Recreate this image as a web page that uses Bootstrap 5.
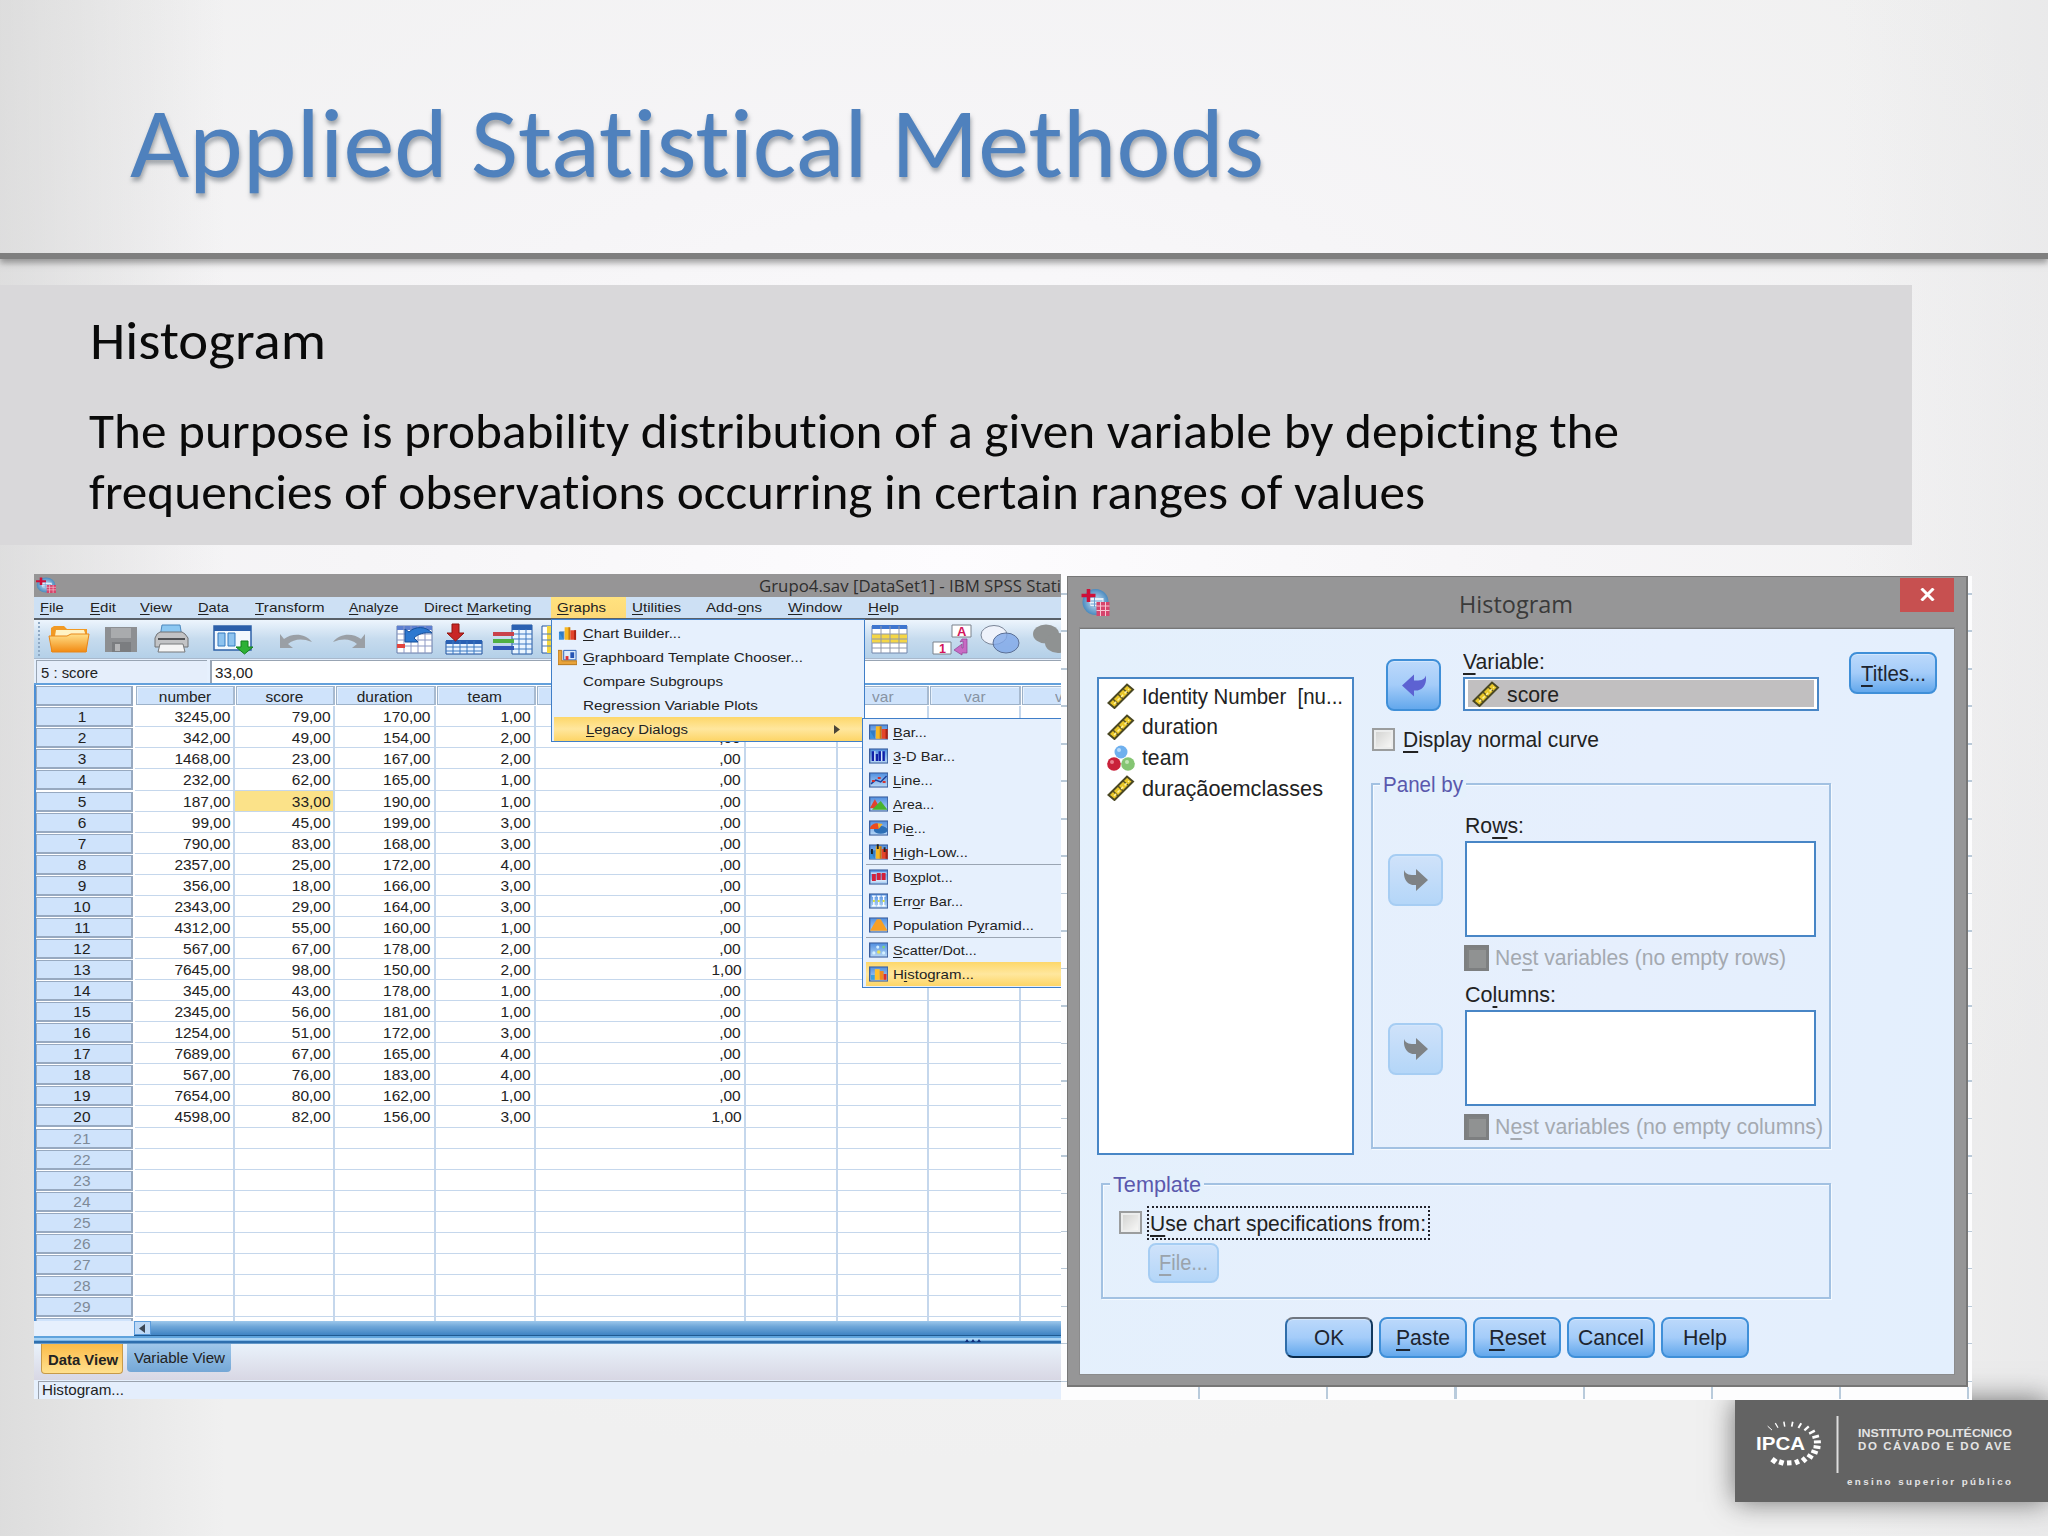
<!DOCTYPE html>
<html lang="en">
<head>
<meta charset="utf-8">
<title>Applied Statistical Methods</title>
<link href="https://cdn.jsdelivr.net/npm/bootstrap@5.3.0/dist/css/bootstrap.min.css" rel="stylesheet">
<style>
body{width:2048px;height:1536px;overflow:hidden;position:relative;font-family:"Liberation Sans",Arial,sans-serif;color:#222;
background:linear-gradient(90deg,rgba(205,205,205,.55),rgba(230,230,230,0) 11%),linear-gradient(270deg,rgba(222,222,224,.35),rgba(240,240,240,0) 10%),radial-gradient(ellipse 1300px 900px at 950px 560px,#fdfcfe 0,#f6f5f7 45%,#f0f0f0 100%)}
[data-w]{display:inline-block;white-space:nowrap;transform-origin:0 50%;flex:none}
u{text-decoration-thickness:1px;text-underline-offset:2px}
.slide-head{height:259px;padding:94px 0 0 130px;border-bottom:6px solid #7f7f7f;box-shadow:0 4px 6px rgba(90,90,90,.55)}
.slide-head h1{font:400 99px/100px Carlito,Lato,sans-serif;font-variant-ligatures:none;color:#4f81bd;margin:0;text-shadow:1px 4px 4px rgba(80,90,100,.5)}
.band{width:1912px;height:260px;margin-top:26px;padding:26px 0 0 89px;background:#d9d8da;font-family:Carlito,Lato,sans-serif;font-variant-ligatures:none;color:#0a0a0a}
.band h2{font-size:54px;line-height:60px;margin:0 0 29.5px 1px}
.band p{font-size:49.5px;line-height:61px;margin:0}
/* data editor window */
.editor{left:34px;top:574px;width:1027px;height:825px;overflow:hidden;background:#e6f0fd}
.e-title{height:23px;background:#969596;padding-left:724.7px;font:15.5px/24px "Open Sans",sans-serif;color:#2e2e2e}
.e-menu{height:21px;background:#cde0f4;font-size:13.5px;line-height:21px}
.e-menu>span{position:relative;z-index:1}
.e-menu .hot::before{content:"";position:absolute;z-index:-1;inset:0 -20px 0 -6px;background:linear-gradient(#ffe27f,#fdd977)}
.e-tools{height:41px;border-top:2px solid #596068;border-bottom:1px solid #a9b9cc;background:linear-gradient(#edf5fd,#c6dbee 50%,#b4d0e8)}
.e-edit{height:26px;font-size:14.5px;line-height:24px;border-bottom:2px solid #63a0db;padding-top:1px}
.e-edit .w1{width:171px;margin-left:2px;padding-left:4px;border:solid #98a4b3;border-width:1px 0 0 1px;background:#e5eefb}
.e-edit .w2{margin-left:3px;padding-left:3px;border:solid #98a4b3;border-width:1px 0 0 2px;background:#fff}
.grid-area{height:635.5px;overflow:hidden;border-left:2px solid #4c8fd6;background:#fff;font-size:14.2px}
.g-row{height:21.07px;line-height:22px}
.g-row>div{flex:none;border:solid #c5d7ec;border-width:0 2px 1px 0;text-align:right;padding-right:3px}
.g-row>div>span{display:inline-block;transform:scaleX(1.09);transform-origin:100% 50%}
.g-row>.rh{width:97px;background:#cfe3fb;border:1px solid #97a9c0;border-right-width:2px;border-bottom-width:2px;height:20px;margin:1px 2px 0 0;line-height:18px;text-align:center;padding:0 4px 0 0}
.g-row>.rh>span,.g-head>div>span{transform-origin:50% 50%}
.g-row>.blank-rh{color:#7e8a98}
.g-head{height:21.3px}
.g-head>div{text-align:center;background:#cfe3fb;border:1px solid #9db2c9;border-right:2px solid #a7bad0;padding:0;margin:1px 0 1px 1px;line-height:20px}
.g-head>.c{box-shadow:inset 1px 1px #e6f1fd;padding:0 1px 0 0}
.c-a{width:100.2px}.c-b{width:210.4px}.c-c{width:91.6px}
.g-head>.c-a{width:99.2px}.g-head>.c-b{width:209.4px}.g-head>.c-c{width:90.6px}
.pale{color:#8793a3}
.picked{background:#fbe289}
.h-scroll{height:15px;margin-left:100px;background:linear-gradient(#9dc8ec,#6ea6d8 40%,#3f83c3);border-bottom:1px solid #1f5a92}
.h-scroll i{display:block;width:17px;height:14px;background:#bcd8f6;border:1px solid #5c9cdb;padding:2px 0 0 4px;line-height:0}
.splitter{height:8px;background:linear-gradient(#5fa3dc 0 2px,#a9d3f4 2px 4px,#7db5e5 4px 5px,#2e6fae 5px 7px,#9cc3e6)}
.tabs{height:36px;background:linear-gradient(#e9f2fb,#d8d7e4);font-size:14px;padding-left:7px}
.tab-a{width:82px;height:30px;line-height:32px;background:linear-gradient(#fbbb48,#ffe08e);border:1px solid #c79a49;border-top:0;border-radius:0 0 4px 4px;font-weight:700;padding-left:6px}
.tab-b{width:104px;height:28px;line-height:28px;margin-left:4px;background:linear-gradient(#9fc7ea,#74a7d6);border-radius:0 0 4px 4px;padding-left:7px}
.status{height:20px;margin:1px 0 0 4px;border:solid #9aa2ad;border-width:1px 0 2px 1px;background:#e4eefc;font-size:14.5px;line-height:17px;padding-left:3px}
.drop{border:1.5px solid #3f7ec8;background:#e6f0fd;font-size:13.5px}
.drop>div{height:24px;line-height:24px;display:flex;align-items:center}
.drop svg{flex:none}
.menu1{left:517px;top:45px;width:314px;height:123px;padding:1px 2px}
.menu2{left:828px;top:144px;width:240px;height:270px;padding:1px 3px}
.menu1 [data-w],.menu2 [data-w]{padding-top:1px}
.menu1>div>svg,.menu1>div>b{width:19px;margin:0 6px 0 4px}
.menu2>div>svg{width:19.5px;margin:0 4.5px 0 2.5px}
.menu2>hr{margin:0;border-top:1px solid #8792a0;opacity:.8}
.glow{background:linear-gradient(#fdd76a,#ffe79e 50%,#fdd566)}
/* sheet behind the dialog */
.sheet{left:1061px;top:576px;width:911px;height:823.5px;background:repeating-linear-gradient(#fff0 0 17px,#b9c9d8 17px 18.5px,#fff0 18.5px 37.5px),#fdfdfe}
.sheet .foot{height:12px;margin-top:811px;background:repeating-linear-gradient(90deg,#fdfdfe 0 126px,#b9cbdc 126px 128.2px) 11px 0 no-repeat,#fdfdfe}
.dlg{left:1067px;top:575.5px;width:901px;height:811.5px;background:#969697;border:solid #777;border-width:1px 2px 2px 1px;padding:0 12px}
.d-title{height:52.5px;font:24.5px/30px "Open Sans",sans-serif;color:#3a3a3a}
.d-title>svg{margin:11px 0 0 1px}
.d-title>span{margin:12px 0 0 349px}
.d-title>b{margin:1px 0 0 auto;width:54px;height:34px;background:#c75050;display:flex;align-items:center;justify-content:center}
.d-body{width:874px;height:746px;background:linear-gradient(100deg,#e4f0fc,#e6effd 60%,#e3effd);font-size:22.3px;border-top:1px solid #777;margin-top:-1px;box-shadow:0 0 0 1px #8b8b8c}
.d-body u{text-underline-offset:4px;text-decoration-thickness:2px}
.box{background:#fff;border:2px solid #4886c6;flex:none}
.vars{width:256.5px;height:478px;margin:48px 0 0 17px;padding:2px 0 0 8px}
.vars>div{height:30.7px;display:flex;align-items:center}
.vars svg,.field svg{width:28px;height:26px;margin-right:7px;flex:none}
.mid{width:460px;margin-left:17.5px}
.pbtn{flex:none;border:2px solid #3f8fd8;border-radius:8px;background:linear-gradient(#bcd9fb,#a4ccf9 50%,#63a8ec);display:flex;align-items:center;justify-content:center;box-shadow:inset 0 1px #d3e6fc;color:#1d2530}
.pbtn>[data-w]{padding-top:1px}
.off{border-color:#a6cdf3;background:linear-gradient(#cfe2fa,#b4d6f8);color:#9aa3ac}
.mv{width:55px;height:52px}
.lab{height:28px;line-height:25px}
.field{width:356px;height:34px;padding:1px 3px}
.field>div{height:27px;background:#c1bfc0;padding-left:4px}
.field [data-w]{padding-top:3px}
.cb{width:23px;height:23px;border:2px solid #9b9d9e;background:linear-gradient(135deg,#d0d0ce,#fbfbfa);box-shadow:inset 0 0 0 2px #eceded;flex:none}
.cb.dis{width:25.5px;height:26px;border:3px solid #7d7f80;background:#909292;box-shadow:inset 2px 2px #808282}
.fs{border:2px solid #a2c1e2;box-shadow:inset 1px 1px #f5faff,1px 1px #f5faff}
.leg{line-height:24px;height:24px;margin:-11.6px 0 0 7px;padding:0 3px;color:#5a58ad;background:#e4f0fc;display:table}
.grp{height:168.7px}
.nest{height:26px;gap:6px;margin:8px 0 0 -1.5px;color:#a4a9b0}
.ants{width:283px;height:34px;border:2px dotted #23232b;line-height:31px;padding-left:1px}
.ok{border-color:#6f7680 #12395e #0a2b4b #2f6da9}
/* school plate */
.plate{left:1735px;top:1400px;width:313px;height:102px;background:#636363;box-shadow:0 0 26px rgba(70,70,70,.75)}
</style>
</head>
<body>
<footer class="plate position-absolute"><svg width="313" height="102" fill="#fff">
<g id="rays"></g>
<text x="21" y="50" font-size="18.500" font-weight="700" textLength="49" lengthAdjust="spacingAndGlyphs">IPCA</text>
<path d="M101.500 16h2v57h-2z" fill="#ddd"/>
<g font-weight="700" fill="#e4e4e4"><text x="123" y="37" font-size="11.500" textLength="154" lengthAdjust="spacingAndGlyphs">INSTITUTO POLITÉCNICO</text>
<text x="123" y="50" font-size="11.500" textLength="153">DO CÁVADO E DO AVE</text>
<text x="112" y="85" font-size="9.800" textLength="164">ensino superior público</text></g>
</svg></footer>
<header class="slide-head"><h1><span data-w="1134">Applied Statistical Methods</span></h1></header>
<section class="band">
<h2><span data-w="236">Histogram</span></h2>
<p><span data-w="1530">The purpose is probability distribution of a given variable by depicting the</span><br><span data-w="1336">frequencies of observations occurring in certain ranges of values</span></p>
</section>

<svg width="0" height="0" class="position-absolute">
<defs>
<linearGradient id="fo" x2="0" y2="1"><stop stop-color="#ffe08a"/><stop offset="1" stop-color="#f28a12"/></linearGradient>
<linearGradient id="sk" x2="0" y2="1"><stop stop-color="#4f8ee0"/><stop offset="1" stop-color="#b9d8f6"/></linearGradient>
<radialGradient id="gl"><stop stop-color="#cfe6f7"/><stop offset="1" stop-color="#4a8abf"/></radialGradient>
<symbol id="ruler" viewBox="0 0 28 26"><path d="M1.500 20 20 1.500l6 5L7.500 25z" fill="#e9c727" stroke="#4a4823" stroke-width="2"/><path d="m6 16 5 5m0-10 5 5m0-10 5 4" stroke="#5a5222" stroke-width="1.500"/><path d="m7 21 15-15" stroke="#fff2a0" stroke-width="1.500" stroke-dasharray="3 2"/></symbol>
<symbol id="spss" viewBox="0 0 28 28"><circle cx="14" cy="14" r="13" fill="url(#gl)"/><path d="M7 10h15v8H9z" fill="#e9f3fb"/><path d="M9 13h12M9 16h10M13 9v10" stroke="#6aa0d0"/><path d="M7 1v13M0 7.500h14" stroke="#cf1038" stroke-width="3.600"/><path d="M15 14h13v14H15z" fill="#d6456c"/><path d="M15 18h13M15 22.500h13M19 14v14M24 14v14" stroke="#f7c6d2"/></symbol>
<symbol id="arr" viewBox="0 0 24 22"><path d="M0 1c2 5 6 5 12 5V0l12 11-12 11v-6C4 17-1 11 0 1z"/></symbol>
<symbol id="bars" viewBox="0 0 20 16"><path d="M1 7h5v8H1z" fill="#3a90dd"/><path d="m1 7 1-1h5v8l-1 1z" fill="#2468b0" fill-opacity=".5"/><path d="M7 2h5v13H7z" fill="#f7b823"/><path d="M11 2h2v13h-2z" fill="#c87b10"/><path d="M13 5h6v10h-6z" fill="#e4442a"/><path d="M17 5h2v10h-2z" fill="#a82315"/></symbol>
<symbol id="frm" viewBox="0 0 20 16"><path d="M.7.700h18.600v14.600H.7z" fill="url(#sk)" stroke="#3b5f9e" stroke-width="1.400"/></symbol>
</defs></svg>

<main class="editor position-absolute">
<div class="e-title d-flex position-relative"><svg class="position-absolute" style="left:2px;top:3px" width="20" height="16" viewBox="0 0 28 28" preserveAspectRatio="none"><use href="#spss" width="28" height="28"/></svg><span data-w="302">Grupo4.sav [DataSet1] - IBM SPSS Stati</span></div>
<nav class="e-menu d-flex" id="menubar"></nav>
<div class="e-tools"><svg class="d-block" width="1027" height="38" viewBox="34 620 1027 38" fill="none">
<path d="M39 622v35" stroke="#8fa9c4" stroke-width="2" stroke-dasharray="2 2"/>
<path d="M51 652V628l3-2h10l3 3h20v23z" fill="#f19a24"/><path d="M56 630h28l2 6H55z" fill="#fff3c4"/><path d="M49 636h18l4-2h18l-3 18H52z" fill="url(#fo)" stroke="#e8871a"/>
<path d="M105 627h32v25h-32z" fill="#8d8f92"/><path d="M111 628h20v10h-20z" fill="#a9abad"/><path d="M112 642h19v10h-19z" fill="#7b7d80"/><path d="M115 644h5v7h-5z" fill="#b5b6b8"/>
<path d="M162 625h18l2 12h-22z" fill="#8cc8f2" stroke="#4c88bd"/><path d="M157 634l3-2h22l3 2 3 4v9h-33v-9z" fill="#c2c3c5" stroke="#707275"/><path d="M158 639h27" stroke="#515356" stroke-width="2"/><path d="M160 644h23l2 8h-27z" fill="#f4f4f4" stroke="#77797b"/>
<path d="M214 626h37v24h-37z" fill="#f3f8fd" stroke="#2f62a8" stroke-width="1.500"/><path d="M214 626h37v5h-37z" fill="#2b5faa"/><path d="M218 633h7v13h-7zM228 633h7v13h-7z" fill="#8ec3ef" stroke="#347ac0"/><path d="M241 641h7v6h5l-8.500 7-8.500-7h5z" fill="#2eb135" stroke="#13801d"/>
<path d="M280 634v14h13l-5-4c6-5 14-6 24-2-7-9-20-9-28-3z" fill="#9a9fa5"/><path d="M365 634v14h-13l5-4c-6-5-14-6-24-2 7-9 20-9 28-3z" fill="#9a9fa5"/>
<path d="M397 626h35v27h-35z" fill="#fff" stroke="#667aa8"/><path d="M397 626h35v4h-35z" fill="#5d7fd0"/><path d="M397 634h35M397 640h35M397 646h35M404 626v27M411 626v27M418 626v27M425 626v27" stroke="#8b98c4"/><path d="M397 644h8v4h-8z" fill="#e2453f"/><path d="M405 629v13h13l-4-4c4-4 10-6 18-5-6-7-17-7-23-1z" fill="#2d78d0" stroke="#164f9a"/>
<path d="M446 641h36v13h-36z" fill="#e7f3ff" stroke="#1d4f9b"/><path d="M446 640h36v4h-36z" fill="#2860b3"/><path d="M446 647h36M446 651h36M453 641v13M460 641v13M467 641v13M474 641v13" stroke="#3b78c2"/><path d="M452 624h7v9h5l-8.500 8-8.500-8h5z" fill="#c92625" stroke="#90140f"/>
<path d="M512 625h20v29h-20z" fill="#eaf5ff" stroke="#24579f"/><path d="M512 625h20v5h-20z" fill="#2c62b2"/><path d="M512 634h20M512 639h20M512 644h20M512 649h20M519 629v25M526 629v25" stroke="#3d79c3"/><path d="M493 634h21" stroke="#c9414a" stroke-width="4"/><path d="M493 641h21" stroke="#4fb044" stroke-width="4"/><path d="M493 648h21" stroke="#3157b8" stroke-width="4"/>
<path d="M542 626h14v27h-14z" fill="#fff" stroke="#24579f"/><path d="M547 626h4v27h-4z" fill="#f2d540"/><path d="M542 634h12M542 640h12M542 646h12" stroke="#4d78b5"/>
<path d="M872 626h35v27h-35z" fill="#fff" stroke="#7186ac"/><path d="M872 625h35v4h-35z" fill="#3e76cf"/><path d="M872 634h35v9h-35z" fill="#f5d646"/><path d="M872 634h35M872 639h35M872 643h35M872 648h35M881 626v27M890 626v27M899 626v27" stroke="#9098aa"/>
<path d="M952 625h19v12h-19zM933 642h18v12h-18z" fill="#fff" stroke="#7b828c"/><path d="M962 639h5v14h-5v2l-8-5 8-6v4h1v-7l-3 1z" fill="#c76bc4" stroke="#8e4090" stroke-width=".7"/>
<text x="957" y="635.500" font-size="13" font-weight="700" fill="#d3155b">A</text><text x="939" y="652.500" font-size="12.500" font-weight="700" fill="#d3155b">1</text>
<ellipse cx="994" cy="635" rx="13" ry="9.500" fill="#eef2fb" stroke="#7b8597"/><ellipse cx="1006" cy="643" rx="13" ry="10" fill="#7fa8e8" fill-opacity=".8" stroke="#5b7096"/>
<ellipse cx="1046" cy="634" rx="13" ry="9.500" fill="#8f9292"/><ellipse cx="1058" cy="643" rx="13" ry="10" fill="#8f9292"/>
</svg></div>
<div class="e-edit d-flex"><div class="w1"><span data-w="57">5 : score</span></div><div class="w2 flex-grow-1"><span data-w="38">33,00</span></div></div>
<div class="grid-area" id="cells"></div>
<div class="h-scroll"><i><svg width="7" height="9"><path d="M6 0v9L0 4.500z" fill="#3b4654"/></svg></i></div>
<div class="splitter position-relative"><svg class="position-absolute" style="left:931px;top:2px" width="18" height="5"><path d="M0 4l2-3 2 3zM6 4l2-3 2 3zM12 4l2-3 2 3z" fill="#0e2d7a"/></svg></div>
<div class="tabs d-flex"><div class="tab-a"><span data-w="70">Data View</span></div><div class="tab-b"><span data-w="91">Variable View</span></div></div>
<div class="status"><span data-w="82">Histogram...</span></div>

<div class="drop menu1 position-absolute">
<div><svg height="16" viewBox="0 0 20 16"><use href="#bars"/></svg><span data-w="98"><u>C</u>hart Builder...</span></div>
<div><svg height="17" viewBox="0 0 20 17"><path d="M6 1h13v10H6z" fill="#dcecfc" stroke="#2a62b8"/><path d="M8 7h3v4H8z" fill="#d33"/><path d="M13 3h4v6h-4z" fill="#2554b5"/><path d="M0 1h4v11h16v4H0z" fill="#e8a33a" stroke="#b4751b"/></svg><span data-w="220"><u>G</u>raphboard Template Chooser...</span></div>
<div><b></b><span data-w="140">Compare Subgroups</span></div>
<div><b></b><span data-w="175">Regression Variable Plots</span></div>
<div class="glow"><b></b><span style="margin-left:2.500px" data-w="102"><u>L</u>egacy Dialogs</span><svg class="ms-auto" style="width:6px;margin-right:22px" height="9"><path d="M0 0v9l6-4.500z" fill="#4b4538"/></svg></div>
</div>
<div class="drop menu2 position-absolute" id="legacy"></div>
</main>

<div class="sheet position-absolute"><div class="foot"></div></div>
<section class="dlg position-absolute">
<div class="d-title d-flex"><svg width="29" height="28"><use href="#spss"/></svg><span data-w="114">Histogram</span><b><svg width="15" height="13"><path d="m1.500.500 12 12m0-12-12 12" stroke="#fff" stroke-width="3"/></svg></b></div>
<div class="d-body">
 <div class="d-flex">
  <div class="box vars">
   <div><svg><use href="#ruler"/></svg><span data-w="201">Identity Number&nbsp; [nu...</span></div>
   <div><svg><use href="#ruler"/></svg><span data-w="76">duration</span></div>
   <div><svg viewBox="0 0 28 26"><circle cx="14" cy="7" r="6.500" fill="#6fb0ee"/><circle cx="7" cy="19" r="6.800" fill="#c9213a"/><circle cx="21" cy="19" r="6.800" fill="#85c573"/><circle cx="12" cy="5" r="2" fill="#b9dcfb"/><circle cx="5" cy="17" r="2" fill="#ea7f8d"/><circle cx="20" cy="17" r="2" fill="#c3e6b6"/></svg><span data-w="47">team</span></div>
   <div><svg><use href="#ruler"/></svg><span data-w="181">duraçãoemclasses</span></div>
  </div>
  <div class="mid">
   <div class="d-flex">
    <div class="pbtn mv" style="margin:30px 0 0 15px"><svg width="24" height="23" style="transform:scaleX(-1)" fill="#5d62d2"><use href="#arr"/></svg></div>
    <div style="margin:20px 0 0 22px"><div class="lab"><span data-w="82"><u>V</u>ariable:</span></div>
     <div class="box field"><div class="d-flex align-items-center"><svg><use href="#ruler"/></svg><span data-w="52">score</span></div></div></div>
   </div>
   <div class="d-flex align-items-center gap-2" style="height:23px;margin:17px 0 32px 1px"><div class="cb"></div><span data-w="196"><u>D</u>isplay normal curve</span></div>
   <div class="fs" style="height:366px">
    <div class="leg" style="margin-bottom:15.600px"><span data-w="80">Panel by</span></div>
    <div class="d-flex grp"><div class="pbtn off mv" style="margin:41px 22px 0 15px"><svg width="24" height="22" fill="#7e8285"><use href="#arr"/></svg></div>
     <div><div class="lab"><span data-w="59">Ro<u>w</u>s:</span></div><div class="box" style="width:351px;height:96px"></div>
     <div class="d-flex align-items-center nest"><div class="cb dis"></div><span data-w="291">Ne<u>s</u>t variables (no empty rows)</span></div></div></div>
    <div class="d-flex grp"><div class="pbtn off mv" style="margin:41px 22px 0 15px"><svg width="24" height="22" fill="#7e8285"><use href="#arr"/></svg></div>
     <div><div class="lab"><span data-w="91">Co<u>l</u>umns:</span></div><div class="box" style="width:351px;height:96px"></div>
     <div class="d-flex align-items-center nest"><div class="cb dis"></div><span data-w="328">N<u>e</u>st variables (no empty columns)</span></div></div></div>
   </div>
  </div>
  <div class="pbtn" style="width:88px;height:42px;margin:23px 0 0 18px"><span data-w="65"><u>T</u>itles...</span></div>
 </div>
 <div class="fs" style="width:730px;height:116px;margin:27.500px 0 18.500px 21px">
  <div class="leg"><span data-w="88">Template</span></div>
  <div class="d-flex align-items-center" style="margin:8.600px 0 3px 16px;gap:4.500px"><div class="cb"></div><div class="ants"><span data-w="276"><u>U</u>se chart specifications from:</span></div></div>
  <div class="pbtn off" style="width:71px;height:40px;margin-left:45px"><span data-w="49"><u>F</u>ile...</span></div>
 </div>
 <div class="d-flex" style="margin-left:205px;gap:6px" id="dlgBtns">
  <div class="pbtn ok"><span data-w="30">OK</span></div><div class="pbtn"><span data-w="54"><u>P</u>aste</span></div><div class="pbtn"><span data-w="57"><u>R</u>eset</span></div><div class="pbtn"><span data-w="66">Cancel</span></div><div class="pbtn"><span data-w="44">Help</span></div>
 </div>
</div>
</section>

<script src="https://cdn.jsdelivr.net/npm/bootstrap@5.3.0/dist/js/bootstrap.bundle.min.js"></script>
<script>
// menu bar: left edge, width, label
const bar=[[40,23.5,'<u>F</u>ile'],[90,26,'<u>E</u>dit'],[140,32,'<u>V</u>iew'],[198,31,'<u>D</u>ata'],[255,69.5,'<u>T</u>ransform'],[349,49.5,'<u>A</u>nalyze'],[424,107.5,'Direct <u>M</u>arketing'],[557,49,'<u>G</u>raphs'],[632,49,'<u>U</u>tilities'],[706,56,'Add-<u>o</u>ns'],[788,54,'<u>W</u>indow'],[868,31,'<u>H</u>elp']];
let at=34;
document.getElementById('menubar').innerHTML=bar.map(([x,w,t],i)=>{const g=x-at;at=x+w;return `<span class="${i==7?'hot':''}" style="margin-left:${g}px"><span data-w="${w}">${t}</span></span>`}).join('');
// case data
const data=`3245 79 170 1 |342 49 154 2 0|1468 23 167 2 0|232 62 165 1 0|187 33 190 1 0|99 45 199 3 0|790 83 168 3 0|2357 25 172 4 0|356 18 166 3 0|2343 29 164 3 0|4312 55 160 1 0|567 67 178 2 0|7645 98 150 2 1|345 43 178 1 0|2345 56 181 1 0|1254 51 172 3 0|7689 67 165 4 0|567 76 183 4 0|7654 80 162 1 0|4598 82 156 3 1`.split('|').map(r=>r.split(' '));
const cls=['c-a','c-a','c-a','c-a','c-b','c-c','c-c','c-c','c-c'];
let h='<div class="g-row g-head d-flex"><div class="rh"></div>'+['number','score','duration','team','','var','var','var','var'].map((t,i)=>`<div class="c ${cls[i]} ${i>4?'pale':''}"><span>${t}</span></div>`).join('')+'</div>';
for(let r=0;r<30;r++){
 h+=`<div class="g-row d-flex"><div class="rh ${r>19?'blank-rh':''}"><span>${r<29?r+1:''}</span></div>`+cls.map((c,i)=>{const v=data[r]&&data[r][i];const t=!v?'':(v==='0'?'':v)+',00';return `<div class="${c}${r==4&&i==1?' picked':''}"><span>${t}</span></div>`}).join('')+'</div>';
}
document.getElementById('cells').innerHTML=h;
// Legacy Dialogs submenu
const B='<use href="#bars"/>';
const sub=[['<u>B</u>ar...',33.7,B],['<u>3</u>-D Bar...',62,'<path d="M4 3v10M8 6v7M11 3v10M15 3v10" stroke="#1020a8" stroke-width="2.500"/><path d="M6 3v10M13 3v10" stroke="#e8f2ff"/>'],['<u>L</u>ine...',39.7,'<path d="m2 12 5-4 5 2 6-6" stroke="#1c3f9a" fill="none" stroke-width="1.500"/><path d="M3 8h3v2H3zM9 5h3v2H9zM14 9h3v2h-3z" fill="#d5342d"/>'],['<u>A</u>rea...',41,'<path d="m1 12 5-9 6 10z" fill="#e3402f"/><path d="m3 14 9-9 7 9z" fill="#48b32e"/>'],['Pi<u>e</u>...',32.7,'<ellipse cx="12" cy="10" rx="7" ry="4" fill="#2d6fb5"/><path d="M10 9 1 9c0-4 4-6 8-6z" fill="#ec4b1e"/><path d="m10 9-1-6 5 1z" fill="#f6b42a"/>'],['<u>H</u>igh-Low...',75,B+'<path d="M3 5v5M9 0v5M16 3v5" stroke="#222" stroke-width="2"/>'],0,['Bo<u>x</u>plot...',59.7,'<path d="M2 4h16M2 12h16" stroke="#fff"/><path d="M3 5h4v7H3zM8 4h4v7H8zM13 4h4v7h-4z" fill="#d3203a"/>'],['Err<u>o</u>r Bar...',70,'<path d="M5 3v10M10 3v10M15 3v10M3 3h4M8 3h4M13 3h4M3 13h4M8 13h4M13 13h4" stroke="#fff" stroke-width="1.400"/><path d="M4 7h2v2H4zM9 7h2v2H9zM14 7h2v2h-2z" fill="#d7e03c"/>'],['Population P<u>y</u>ramid...',141,'<path d="M1 14 8 2h4l7 12z" fill="#f79f24"/>'],0,['<u>S</u>catter/Dot...',83.7,'<g fill="#d4f0ff"><circle cx="5" cy="11" r="1.600"/><circle cx="9" cy="5" r="1.600"/><circle cx="15" cy="11" r="1.600"/></g><circle cx="10" cy="10" r="1.800" fill="#e6e05a"/><circle cx="15" cy="5" r="1.400" fill="#7fd37a"/>'],['H<u>i</u>stogram...',81,'<path d="M2 9h4v5H2z" fill="#3aa0dd"/><path d="M6 3h5v11H6z" fill="#ffc02c"/><path d="M11 5h4v9h-4z" fill="#f08a1c"/><path d="M15 8h3v6h-3z" fill="#e0302a"/>']];
document.getElementById('legacy').innerHTML=sub.map((s,i)=>s?`<div class="${i==12?'glow':''}"><svg height="16" viewBox="0 0 20 16"><use href="#frm"/>${s[2]}</svg><span data-w="${s[1]}">${s[0]}</span></div>`:'<hr>').join('');
document.querySelectorAll('#dlgBtns .pbtn').forEach(b=>{b.style.width='88px';b.style.height='41px'});
// sunburst of the school mark
let ry='';
for(let i=0;i<17;i++){const a=(-128+i*15.4)*Math.PI/180,k=1+i*.25;const c=Math.cos(a),s=Math.sin(a);
 ry+=`<line x1="${53+c*26}" y1="${43.500+s*17}" x2="${53+c*33}" y2="${43.500+s*22}" stroke="#fff" stroke-width="${k}"/>`}
document.getElementById('rays').innerHTML=ry;
// stretch each label to its column width
document.querySelectorAll('[data-w]').forEach(e=>{const w=+e.dataset.w,r=e.getBoundingClientRect().width;e.style.transform=`scaleX(${w/r})`;e.style.marginRight=(w-r)+'px'});
</script>
</body>
</html>
